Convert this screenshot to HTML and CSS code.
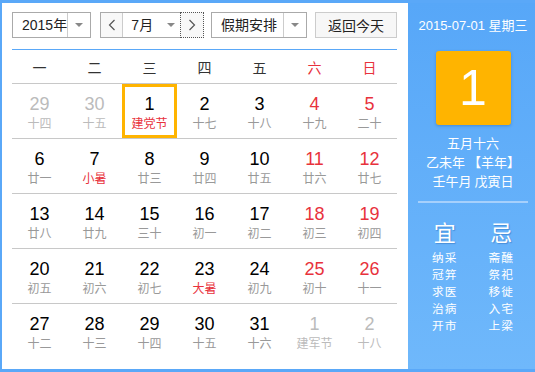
FILE: index.html
```html
<!DOCTYPE html>
<html lang="zh-CN">
<head>
  <meta charset="UTF-8" />
  <title>万年历</title>
  <link rel="stylesheet" href="styles.css">
</head>
<body>
  <div class="cal">
    <div class="main">
      <div class="bar">
        <div class="sel sel-year"><span class="sel-text">2015年</span><span class="sel-arrow"></span></div>
        <div class="month-group">
          <span class="nav"><svg width="8" height="12" viewBox="0 0 8 12"><polyline points="6.5,1 1.5,6 6.5,11" fill="none" stroke="#555" stroke-width="1.2"/></svg></span>
          <div class="sel sel-month"><span class="sel-text">7月</span><span class="sel-arrow"></span></div>
          <span class="nav nav-next"><svg width="8" height="12" viewBox="0 0 8 12"><polyline points="1.5,1 6.5,6 1.5,11" fill="none" stroke="#555" stroke-width="1.2"/></svg></span>
        </div>
        <div class="sel sel-holiday"><span class="sel-text">假期安排</span><span class="sel-arrow"></span></div>
        <button class="today-btn">返回今天</button>
      </div>

      <div class="week">
        <span>一</span><span>二</span><span>三</span><span>四</span><span>五</span><span class="red">六</span><span class="red">日</span>
      </div>

      <div class="days" id="days"></div>
    </div>

    <div class="side">
      <div class="side-date">2015-07-01 星期三</div>
      <div class="big-day">1</div>
      <div class="lunar">
        <div>五月十六</div>
        <div>乙未年 【羊年】</div>
        <div>壬午月 戊寅日</div>
      </div>
      <div class="side-line"></div>
      <div class="yiji">
        <div class="yiji-col">
          <div class="yiji-title">宜</div>
          <div class="yiji-item">纳采</div><div class="yiji-item">冠笄</div><div class="yiji-item">求医</div><div class="yiji-item">治病</div><div class="yiji-item">开市</div>
        </div>
        <div class="yiji-col">
          <div class="yiji-title">忌</div>
          <div class="yiji-item">斋醮</div><div class="yiji-item">祭祀</div><div class="yiji-item">移徙</div><div class="yiji-item">入宅</div><div class="yiji-item">上梁</div>
        </div>
      </div>
    </div>
  </div>

  <script>
    // [day, lunar, flags]  o = other month, w = weekend, f = festival, t = today
    const days = [
      [29, '十四', 'o'], [30, '十五', 'o'], [1, '建党节', 'ft'], [2, '十七', ''], [3, '十八', ''], [4, '十九', 'w'], [5, '二十', 'w'],
      [6, '廿一', ''], [7, '小暑', 'f'], [8, '廿三', ''], [9, '廿四', ''], [10, '廿五', ''], [11, '廿六', 'w'], [12, '廿七', 'w'],
      [13, '廿八', ''], [14, '廿九', ''], [15, '三十', ''], [16, '初一', ''], [17, '初二', ''], [18, '初三', 'w'], [19, '初四', 'w'],
      [20, '初五', ''], [21, '初六', ''], [22, '初七', ''], [23, '大暑', 'f'], [24, '初九', ''], [25, '初十', 'w'], [26, '十一', 'w'],
      [27, '十二', ''], [28, '十三', ''], [29, '十四', ''], [30, '十五', ''], [31, '十六', ''], [1, '建军节', 'o'], [2, '十八', 'o']
    ];

    let html = '';
    for (let r = 0; r < 5; r++) {
      html += '<div class="row">';
      for (let c = 0; c < 7; c++) {
        const d = days[r * 7 + c];
        let cls = 'cell';
        if (d[2].includes('o')) cls += ' other';
        if (d[2].includes('w')) cls += ' weekend';
        if (d[2].includes('f')) cls += ' fest';
        if (d[2].includes('t')) cls += ' today';
        html += `<div class="${cls}"><div class="num">${d[0]}</div><div class="ln">${d[1]}</div></div>`;
      }
      html += '</div>';
    }
    document.getElementById('days').innerHTML = html;
  </script>
</body>
</html>
```

FILE: styles.css
```css
body {
  margin: 0;
  font-family: "Liberation Sans", "Noto Sans CJK SC", sans-serif;
}
.cal {
  display: flex;
  width: 535px;
  height: 372px;
  box-sizing: border-box;
  padding: 3px 0 3px 2px;
  background: #5aa8f8;
}
.main {
  width: 406px;
  background: #fff;
  padding: 9px 11px 0 10px;
  box-sizing: border-box;
}
.bar {
  display: flex;
  height: 26px;
  gap: 9px;
}
.sel {
  display: flex;
  height: 26px;
  box-sizing: border-box;
  border: 1px solid #aaa;
  background: #fff;
  font-size: 14px;
  color: #222;
}
.sel-text {
  flex: 1;
  line-height: 24px;
  padding-left: 10px;
  white-space: nowrap;
}
.sel-arrow {
  width: 22px;
  flex: none;
  border-left: 1px solid #ccc;
  position: relative;
}
.sel-arrow::after {
  content: "";
  position: absolute;
  left: 7px;
  top: 10px;
  border-left: 4px solid transparent;
  border-right: 4px solid transparent;
  border-top: 4px solid #888;
}
.sel-year {
  width: 79px;
}
.sel-year .sel-text {
  padding-left: 9px;
}
.month-group {
  display: flex;
  width: 104px;
  height: 26px;
  box-sizing: border-box;
  border: 1px solid #aaa;
}
.month-group .sel {
  border: none;
  border-left: 1px solid #ccc;
  height: 24px;
  width: 59px;
}
.month-group .sel-text {
  padding-left: 8px;
}
.month-group .sel-arrow {
  border-left: none;
  width: 20px;
}
.nav {
  width: 22px;
  display: flex;
  align-items: center;
  justify-content: center;
  background: #f8f8f8;
}
.nav-next {
  border: 1px dotted #555;
  margin: -1px -1px -1px 0;
  width: 23px;
}
.sel-holiday {
  width: 97px;
  margin-left: -2px;
}
.sel-holiday .sel-text {
  padding-left: 9px;
}
.today-btn {
  margin-left: -1px;
  width: 83px;
  height: 26px;
  border: 1px solid #ccc;
  background: #f7f7f7;
  font-family: "Liberation Sans", "Noto Sans CJK SC", sans-serif;
  font-size: 14px;
  color: #222;
  padding: 0;
}
.week {
  display: grid;
  grid-template-columns: repeat(7, 55px);
  margin-top: 11px;
  height: 33px;
  line-height: 34px;
  border-top: 1px solid #5aa8f8;
  border-bottom: 1px solid #c8c8c8;
  text-align: center;
  font-size: 14px;
  color: #333;
  font-family: "Noto Sans CJK SC", sans-serif;
}
.week .red {
  color: #e8323c;
}
.row {
  display: grid;
  grid-template-columns: repeat(7, 55px);
  height: 54px;
  border-bottom: 1px solid #c8c8c8;
}
.row:last-child {
  border-bottom: none;
}
.cell {
  text-align: center;
  padding-top: 10px;
  box-sizing: border-box;
  height: 54px;
}
.num {
  font-size: 18px;
  line-height: 21px;
  color: #000;
}
.ln {
  font-size: 12px;
  line-height: 16px;
  color: #999;
  font-family: "Noto Sans CJK SC", sans-serif;
}
.weekend .num {
  color: #e8323c;
}
.fest .ln {
  color: #e8323c;
}
.other .num {
  color: #bbb;
}
.other .ln {
  color: #bbb;
}
.today {
  box-shadow: inset 0 0 0 3px #ffb400;
}
.side {
  flex: 1;
  background: linear-gradient(#57a7f8, #6fb8fb);
  color: #fff;
  text-align: center;
  font-family: "Liberation Sans", "Noto Sans CJK SC", sans-serif;
  padding: 14px 0 0 3px;
}
.side-date {
  font-size: 13px;
  line-height: 18px;
}
.big-day {
  width: 75px;
  height: 74px;
  margin: 16px auto 0;
  background: #ffb400;
  border-radius: 3px;
  font-size: 50px;
  line-height: 74px;
  box-shadow: 0 1px 3px rgba(0, 60, 140, 0.3);
}
.lunar {
  margin-top: 8px;
  font-size: 13px;
  line-height: 19px;
  font-family: "Noto Sans CJK SC", sans-serif;
}
.side-line {
  height: 2px;
  margin: 11px 7px 0 7px;
  background: #a6d0fc;
}
.yiji {
  display: flex;
  justify-content: center;
  gap: 31px;
  font-family: "Noto Sans CJK SC", sans-serif;
  font-size: 11.7px;
  letter-spacing: 1px;
  padding-top: 15px;
}
.yiji-item {
  height: 17px;
  line-height: 17px;
}
.yiji-title {
  font-size: 22px;
  line-height: 26px;
  letter-spacing: 0;
  margin-bottom: 4px;
  text-shadow: 1px 1px 1px rgba(0, 60, 140, 0.3);
}
```
